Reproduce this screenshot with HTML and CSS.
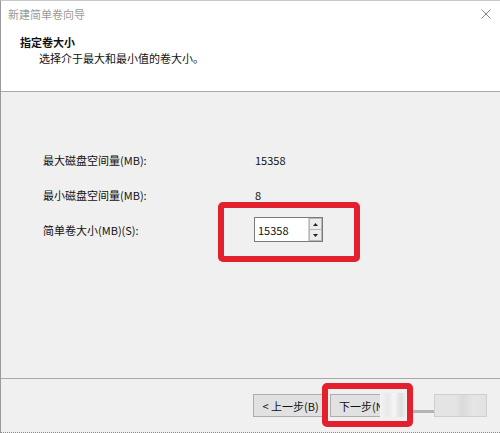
FILE: index.html
```html
<!DOCTYPE html>
<html lang="zh-CN">
<head>
<meta charset="utf-8">
<title>新建简单卷向导</title>
<link rel="stylesheet" href="styles.css">
</head>
<body>
<div class="window">
  <div class="header">
    <div class="titlebar">
      <span class="title">新建简单卷向导</span>
      <svg class="close" width="10" height="10" viewBox="0 0 10 10"><path d="M0.5 0.5 L9.5 9.5 M9.5 0.5 L0.5 9.5" stroke="#8a8a8a" stroke-width="1" fill="none"/></svg>
    </div>
    <div class="heading">指定卷大小</div>
    <div class="subheading">选择介于最大和最小值的卷大小。</div>
  </div>
  <div class="body">
    <div class="row">
      <span class="label">最大磁盘空间量(MB):</span>
      <span class="value">15358</span>
    </div>
    <div class="row">
      <span class="label">最小磁盘空间量(MB):</span>
      <span class="value">8</span>
    </div>
    <div class="row">
      <span class="label">简单卷大小(MB)(S):</span>
      <div class="spinbox">
        <span class="spin-text">15358</span>
        <div class="spin-buttons">
          <div class="spin-btn"><svg width="5" height="3" viewBox="0 0 5 3"><path d="M0 3 L2.5 0 L5 3 Z" fill="#222"/></svg></div>
          <div class="spin-btn"><svg width="5" height="3" viewBox="0 0 5 3"><path d="M0 0 L2.5 3 L5 0 Z" fill="#222"/></svg></div>
        </div>
        <div class="mark mark-input"></div>
      </div>
    </div>
  </div>
  <div class="footer">
    <div class="btn">&lt; 上一步(B)</div>
    <div class="btn btn-next"><span>下一步(N</span><div class="blur"></div><div class="mark mark-next"></div></div>
    <div class="smudge"></div>
    <div class="btn btn-cancel"></div>
  </div>
</div>
</body>
</html>
```
FILE: styles.css
```css
html, body {
  margin: 0;
  padding: 0;
}
body {
  font-family: "Noto Sans CJK SC", "Noto Sans", sans-serif;
  font-size: 11px;
  color: #111;
  background: #f0f0f0;
}
.window {
  width: 500px;
  height: 433px;
  box-sizing: border-box;
  border-left: 1px solid #9a9a9a;
  border-top: 1px solid #c8c8c8;
  border-bottom: 1px dotted #8a8a8a;
  display: flex;
  flex-direction: column;
  overflow: hidden;
}
.header {
  background: #fff;
  height: 91px;
  box-sizing: border-box;
  border-bottom: 1px solid #a8a8a8;
  flex: none;
}
.titlebar {
  height: 26px;
  display: flex;
  align-items: center;
  justify-content: space-between;
  padding: 0 9px 0 7px;
}
.title {
  color: #9a9a9a;
  font-size: 11px;
  line-height: 14px;
}
.close {
  display: block;
}
.heading {
  font-weight: bold;
  padding-left: 19px;
  margin-top: 7px;
  line-height: 16px;
}
.subheading {
  padding-left: 38px;
  line-height: 16px;
}
.body {
  flex: 1;
  background: #f0f0f0;
  padding-top: 50px;
  box-sizing: border-box;
  border-bottom: 1px solid #a8a8a8;
}
.row {
  height: 35px;
  display: flex;
  align-items: center;
  padding-left: 42px;
}
.label {
  width: 212px;
  flex: none;
}
.spinbox {
  position: relative;
  width: 69px;
  height: 25px;
  box-sizing: border-box;
  border: 1px solid #7a7a7a;
  background: #fff;
  display: flex;
  align-items: center;
  justify-content: space-between;
  padding-left: 3px;
  margin-left: -1px;
}
.spin-text {
  line-height: 14px;
}
.spin-buttons {
  width: 13px;
  height: 23px;
  display: flex;
  flex-direction: column;
  border-left: 1px solid #d0d0d0;
}
.spin-btn {
  flex: 1;
  display: flex;
  align-items: center;
  justify-content: center;
  background: #ececec;
  border: 1px solid #b8b8b8;
}
.spin-btn + .spin-btn {
  border-top: none;
}
.spin-btn svg {
  display: block;
}
.mark {
  position: absolute;
  border: 6px solid #e3202d;
  border-radius: 5px;
  box-sizing: border-box;
  pointer-events: none;
}
.mark-input {
  left: -37px;
  top: -16px;
  width: 142px;
  height: 60px;
}
.footer {
  height: 53px;
  flex: none;
  display: flex;
  align-items: center;
  padding-left: 252px;
  box-sizing: border-box;
}
.btn {
  width: 75px;
  height: 23px;
  box-sizing: border-box;
  border: 1px solid #adadad;
  background: #e1e1e1;
  display: flex;
  align-items: center;
  justify-content: center;
  line-height: 14px;
  flex: none;
}
.btn-next {
  position: relative;
  margin-left: 2px;
  justify-content: flex-start;
  padding-left: 8px;
}
.blur {
  position: absolute;
  left: 49px;
  top: -2px;
  width: 26px;
  height: 24px;
  background: linear-gradient(90deg, #f4f4f4 0%, #e8e8e8 30%, #f6f6f6 55%, #dedede 80%, #efefef 100%);
}
.mark-next {
  left: -9px;
  top: -12px;
  width: 91px;
  height: 44px;
}
.smudge {
  width: 21px;
  height: 3px;
  background: #b4b4b4;
  margin-left: 8px;
  margin-top: 12px;
  flex: none;
}
.btn-cancel {
  width: 53px;
  margin-left: 0;
  border-color: #cfcfcf;
  background: linear-gradient(90deg, #e4e4e4 0%, #e4e4e4 40%, #dadada 55%, #e6e6e6 75%, #e1e1e1 100%);
}
```
